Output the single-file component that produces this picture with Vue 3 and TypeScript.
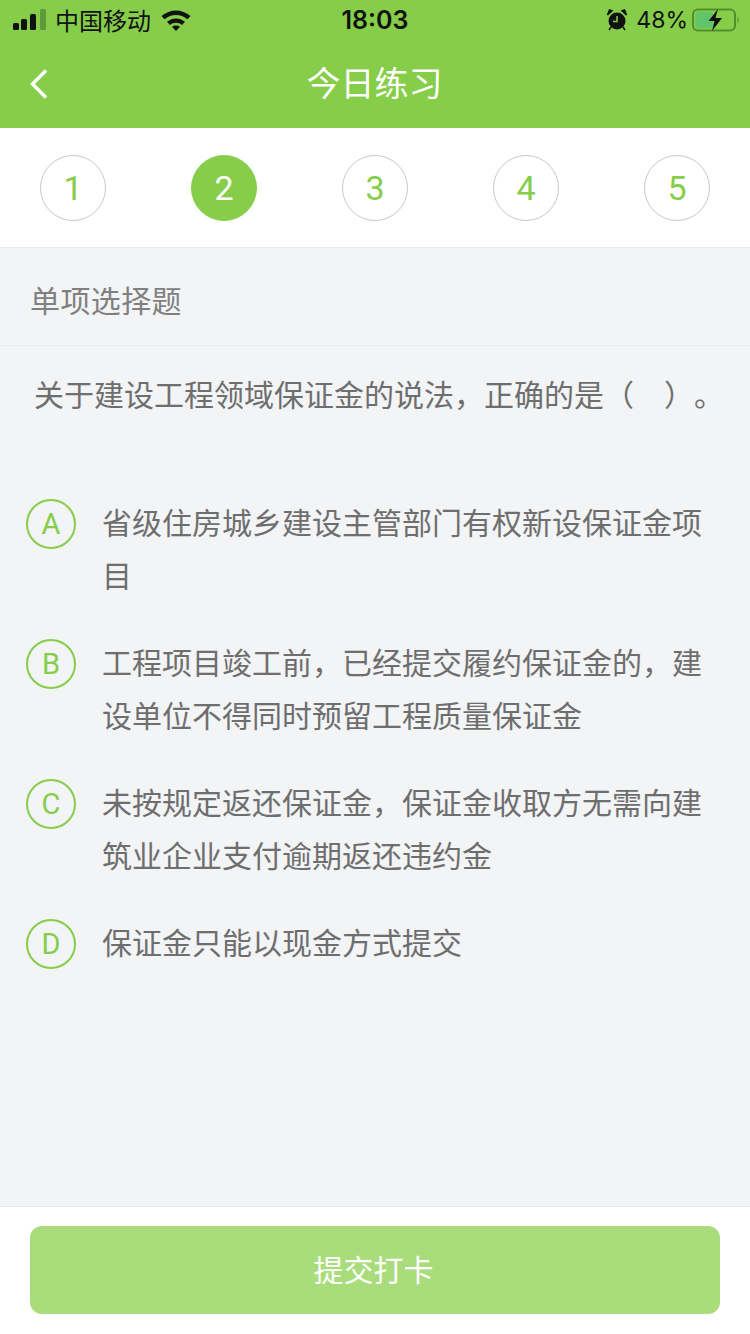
<script setup lang="ts">
const steps: number[] = [1, 2, 3, 4, 5]
const options: { key: string; text: string }[] = [
  { key: 'A', text: '省级住房城乡建设主管部门有权新设保证金项目' },
  { key: 'B', text: '工程项目竣工前，已经提交履约保证金的，建设单位不得同时预留工程质量保证金' },
  { key: 'C', text: '未按规定返还保证金，保证金收取方无需向建筑业企业支付逾期返还违约金' },
  { key: 'D', text: '保证金只能以现金方式提交' },
]
</script>

<template>
  <div class="page">
    <header class="header">
      <div class="status">
        <div class="status-side">
          <svg class="signal" width="34" height="22" viewBox="0 0 34 22">
            <rect x="0" y="14" width="6" height="7" rx="1.500" fill="#111" />
            <rect x="8" y="10" width="6" height="11" rx="1.500" fill="#111" />
            <rect x="17" y="5" width="6" height="16" rx="1.500" fill="#111" />
            <rect x="27" y="0" width="6" height="21" rx="1.500" fill="#5f9a38" />
          </svg>
          <span class="carrier">中国移动</span>
          <svg class="wifi" width="30" height="22" viewBox="0 0 30 22">
            <path d="M0.500 7C9 -.5 21 -.5 29.500 7l-3 3.300C19.800 4.600 10.200 4.600 3.500 10.300Z" fill="#111" />
            <path d="M6 12.800C11.300 8.300 18.700 8.300 24 12.800l-3 3.300C17.300 13 12.700 13 9 16.100Z" fill="#111" />
            <path d="M11 17.800C13.300 16 16.700 16 19 17.800L15 22Z" fill="#111" />
          </svg>
        </div>
        <span class="time">18:03</span>
        <div class="status-side right">
          <svg width="22" height="22" viewBox="0 0 22 22">
            <circle cx="11" cy="12" r="8.500" fill="#111" />
            <path d="M11 7v5.500H7" fill="none" stroke="#86cd4a" stroke-width="1.500" />
            <path d="M1.500 6 6 1.800 3.500 1ZM20.500 6 16 1.800 18.500 1Z" fill="#111" stroke="#111" stroke-width="1.500" />
            <path d="M5 18l-2 3M17 18l2 3" stroke="#111" stroke-width="1.500" />
          </svg>
          <span class="percent">48%</span>
          <svg class="battery" width="48" height="24" viewBox="0 0 48 24">
            <rect x="1" y="1.500" width="42" height="21" rx="5" fill="none" stroke="#4f8f2c" stroke-width="2" />
            <rect x="3.500" y="4" width="18" height="16" rx="3" fill="#60c46b" />
            <path d="M45.500 8.500c1.500.6 1.500 6.400 0 7Z" fill="#4f8f2c" />
            <path d="M26 1 16.500 13h6l-2.500 10 10-13h-6.500Z" fill="#111" />
          </svg>
        </div>
      </div>
      <div class="nav">
        <svg class="back" width="20" height="32" viewBox="0 0 20 32">
          <path d="M17 2.500 3.500 16 17 29.500" fill="none" stroke="#fff" stroke-width="3.500" />
        </svg>
        <h1 class="title">今日练习</h1>
      </div>
    </header>

    <nav class="steps">
      <div v-for="n in steps" :key="n" class="step" :class="{ active: n === 2 }">{{ n }}</div>
    </nav>

    <div class="kind">单项选择题</div>
    <p class="question">关于建设工程领域保证金的说法，正确的是（　）。</p>

    <ul class="options">
      <li v-for="o in options" :key="o.key" class="option">
        <span class="letter">{{ o.key }}</span>
        <span class="text">{{ o.text }}</span>
      </li>
    </ul>

    <footer class="footer">
      <button class="submit" type="button">提交打卡</button>
    </footer>
  </div>
</template>

<style scoped>
.page {
  width: 750px;
  height: 1334px;
  display: flex;
  flex-direction: column;
  background: #f2f4f6;
  font-family: "Noto Sans CJK SC", "Liberation Sans", sans-serif;
  text-spacing-trim: space-all;
  overflow: hidden;
}
.header {
  background: #86cd4a;
  height: 128px;
  flex: none;
}
.status {
  height: 40px;
  display: flex;
  align-items: center;
  justify-content: space-between;
  padding: 0 10px 0 13px;
  color: #111;
  position: relative;
}
.status-side {
  display: flex;
  align-items: center;
  gap: 8px;
}
.status-side.right {
  gap: 8px;
}
.carrier {
  font-size: 24px;
  line-height: 32px;
  margin-right: 2px;
}
.time {
  position: absolute;
  left: 0;
  right: 0;
  text-align: center;
  font-family: Inter, "Liberation Sans", sans-serif;
  font-size: 25px;
  font-weight: 600;
}
.percent {
  font-family: Inter, "Liberation Sans", sans-serif;
  font-size: 23px;
  margin-right: -4px;
}
.battery {
  margin-top: -1px;
}
.nav {
  height: 88px;
  display: flex;
  align-items: center;
  justify-content: center;
  position: relative;
}
.back {
  position: absolute;
  left: 29px;
  top: 28px;
}
.title {
  margin: 0;
  padding-right: 1px;
  color: #fff;
  font-size: 34px;
  font-weight: 400;
  line-height: 84px;
  height: 88px;
}
.steps {
  flex: none;
  box-sizing: border-box;
  height: 120px;
  background: #fff;
  border-bottom: 1px solid #e8e9eb;
  padding: 27px 40px 0;
  display: flex;
  justify-content: space-between;
  align-items: flex-start;
}
.step {
  box-sizing: border-box;
  width: 66px;
  height: 66px;
  border: 1px solid #c8c8c8;
  border-radius: 50%;
  color: #86cd4a;
  display: flex;
  align-items: center;
  justify-content: center;
  font-family: Roboto, "Liberation Sans", sans-serif;
  font-weight: 400;
  font-size: 34px;
}
.step.active {
  background: #86cd4a;
  border-color: #86cd4a;
  color: #fff;
}
.kind {
  flex: none;
  height: 98px;
  box-sizing: border-box;
  border-bottom: 1px solid #e9ebed;
  padding-left: 30px;
  line-height: 103px;
  font-size: 30px;
  letter-spacing: 0.4px;
  color: #808080;
  overflow: hidden;
}
.question {
  margin: 0;
  padding: 23px 0 0 34px;
  font-size: 30px;
  line-height: 48px;
  color: #6e6e6e;
  white-space: nowrap;
}
.options {
  list-style: none;
  margin: 0;
  padding: 82px 44px 0 26px;
  flex: 1;
}
.option {
  display: flex;
  gap: 26px;
  margin-bottom: 38px;
}
.letter {
  box-sizing: border-box;
  flex: none;
  width: 50px;
  height: 50px;
  border: 2px solid #86cd4a;
  border-radius: 50%;
  color: #86cd4a;
  display: flex;
  align-items: center;
  justify-content: center;
  font-family: Roboto, "Liberation Sans", sans-serif;
  font-size: 29px;
  font-weight: 400;
}
.text {
  flex: 1;
  margin-top: -4px;
  font-size: 30px;
  line-height: 53px;
  color: #6e6e6e;
}
.footer {
  flex: none;
  height: 128px;
  box-sizing: border-box;
  background: #fff;
  border-top: 1px solid #e8e9eb;
  padding: 19px 30px 0;
}
.submit {
  display: block;
  width: 690px;
  height: 88px;
  border: none;
  border-radius: 12px;
  background: #a9dc7a;
  color: #fff;
  font-family: inherit;
  font-size: 30px;
  padding: 0 3px 4px 0;
}
</style>
